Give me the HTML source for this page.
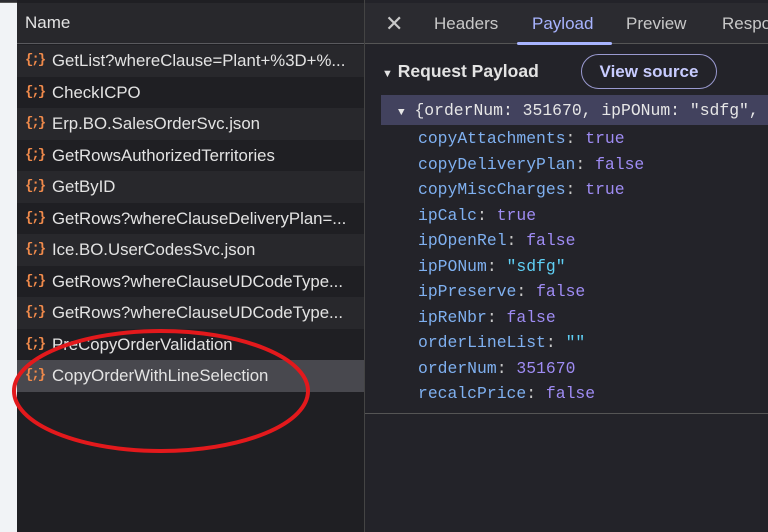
<!DOCTYPE html>
<html><head><meta charset="utf-8"><style>
*{margin:0;padding:0;box-sizing:border-box}
body{width:768px;height:532px;overflow:hidden;background:#1f1f23;font-family:"Liberation Sans",sans-serif;position:relative}
.strip{position:absolute;left:0;top:0;width:17px;height:532px;background:#f1f3f6}
.left{position:absolute;left:17px;top:0;width:347px;height:532px;background:#1f1f23}
.topline{position:absolute;left:0;top:0;width:768px;height:3px;background:#2b2b30;border-bottom:1px solid #555}
.lhead{position:absolute;left:0;top:3px;width:347px;height:41px;background:#28282c;border-bottom:1px solid #5a5a5e;color:#e3e3e3;font-size:17px;line-height:40px;padding-left:8px}
.row{position:absolute;left:0;width:347px;height:31.5px;color:#e3e3e3;font-size:16.8px;line-height:31px;padding-left:35px;white-space:nowrap;overflow:hidden}
.row.a{background:#28282c}
.row.sel{background:#48484e}
.ic{position:absolute;left:8px;top:0;color:#f08a4b;font-family:"Liberation Mono",monospace;font-size:14px;font-weight:bold;letter-spacing:-2px}
.vdiv{position:absolute;left:364px;top:0;width:1px;height:532px;background:#444}
.right{position:absolute;left:365px;top:0;width:403px;height:532px;background:#232329}
.tabs{position:absolute;left:0;top:3px;width:403px;height:41px;background:#2b2b30;border-bottom:1px solid #555}
.tab{position:absolute;top:0;line-height:42px;font-size:17px;color:#c8c8c8}
.tab.on{color:#a8b4ff}
.und{position:absolute;left:152px;top:39px;width:95px;height:3px;background:#a8b4ff;border-radius:2px}
.code{position:absolute;left:53px;font-family:"Liberation Mono",monospace;font-size:16.4px;color:#c8c8c8;white-space:nowrap}
.k{color:#7fb0f0}.n{color:#9f8cf4}.s{color:#5fd0f5}
</style></head><body>
<div class="strip"></div>
<div class="topline"></div>
<div class="left">
<div class="lhead">Name</div>
<div class="row a" style="top:45px"><span class="ic">{;}</span>GetList?whereClause=Plant+%3D+%...</div>
<div class="row" style="top:76.5px"><span class="ic">{;}</span>CheckICPO</div>
<div class="row a" style="top:108px"><span class="ic">{;}</span>Erp.BO.SalesOrderSvc.json</div>
<div class="row" style="top:139.5px"><span class="ic">{;}</span>GetRowsAuthorizedTerritories</div>
<div class="row a" style="top:171px"><span class="ic">{;}</span>GetByID</div>
<div class="row" style="top:202.5px"><span class="ic">{;}</span>GetRows?whereClauseDeliveryPlan=...</div>
<div class="row a" style="top:234px"><span class="ic">{;}</span>Ice.BO.UserCodesSvc.json</div>
<div class="row" style="top:265.5px"><span class="ic">{;}</span>GetRows?whereClauseUDCodeType...</div>
<div class="row a" style="top:297px"><span class="ic">{;}</span>GetRows?whereClauseUDCodeType...</div>
<div class="row" style="top:328.5px"><span class="ic">{;}</span>PreCopyOrderValidation</div>
<div class="row sel" style="top:360px"><span class="ic">{;}</span>CopyOrderWithLineSelection</div>
</div>
<div class="vdiv"></div>
<div class="right">
<div class="tabs">
<span class="tab" style="left:20px;font-size:22px;color:#c8c8c8">✕</span>
<span class="tab" style="left:69px">Headers</span>
<span class="tab on" style="left:167px">Payload</span>
<span class="tab" style="left:261px">Preview</span>
<span class="tab" style="left:357px">Response</span>
<div class="und"></div>
</div>
<div style="position:absolute;left:17px;top:61px;color:#e3e3e3;font-weight:bold;font-size:17.5px"><span style="font-size:11px">▼</span> Request Payload</div>
<div style="position:absolute;left:216px;top:54px;width:136px;height:35px;border:1px solid #9a9ad0;border-radius:18px;color:#c8ccff;font-size:17px;font-weight:bold;text-align:center;line-height:33px">View source</div>
<div style="position:absolute;left:16px;top:95px;width:387px;height:30px;background:#42425e"></div>
<div class="code" style="left:33px;top:101px;color:#e6e6e6"><span style="font-size:11px">▼</span> {orderNum: 351670, ipPONum: "sdfg",</div>
<div class="code" style="top:129px"><span class="k">copyAttachments</span>: <span class="n">true</span></div>
<div class="code" style="top:154.5px"><span class="k">copyDeliveryPlan</span>: <span class="n">false</span></div>
<div class="code" style="top:180px"><span class="k">copyMiscCharges</span>: <span class="n">true</span></div>
<div class="code" style="top:205.5px"><span class="k">ipCalc</span>: <span class="n">true</span></div>
<div class="code" style="top:231px"><span class="k">ipOpenRel</span>: <span class="n">false</span></div>
<div class="code" style="top:256.5px"><span class="k">ipPONum</span>: <span class="s">"sdfg"</span></div>
<div class="code" style="top:282px"><span class="k">ipPreserve</span>: <span class="n">false</span></div>
<div class="code" style="top:307.5px"><span class="k">ipReNbr</span>: <span class="n">false</span></div>
<div class="code" style="top:333px"><span class="k">orderLineList</span>: <span class="s">""</span></div>
<div class="code" style="top:358.5px"><span class="k">orderNum</span>: <span class="n">351670</span></div>
<div class="code" style="top:384px"><span class="k">recalcPrice</span>: <span class="n">false</span></div>
<div style="position:absolute;left:0;top:413px;width:403px;height:1px;background:#555"></div>
</div>
<svg style="position:absolute;left:0;top:0" width="768" height="532"><ellipse cx="161" cy="391" rx="147" ry="60" fill="none" stroke="#e3191c" stroke-width="4"/></svg>
</body></html>
